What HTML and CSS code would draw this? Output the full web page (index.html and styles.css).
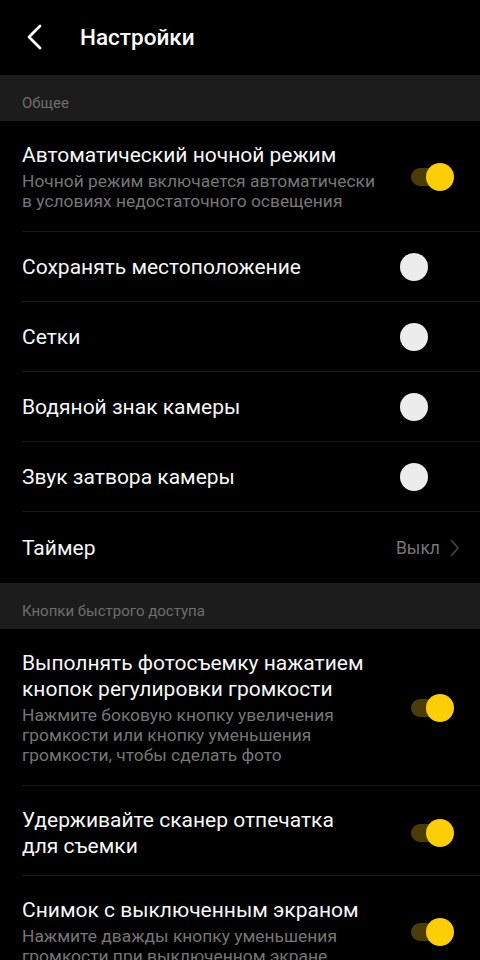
FILE: index.html
```html
<!DOCTYPE html>
<html lang="ru">
<head>
<meta charset="utf-8">
<title>Настройки</title>
<link rel="stylesheet" href="styles.css">
</head>
<body>
<div class="screen">
  <header class="topbar">
    <svg class="back" width="18" height="28" viewBox="0 0 18 28"><path d="M15 3 L4 14 L15 25" fill="none" stroke="#fff" stroke-width="2.8" stroke-linecap="round" stroke-linejoin="round"/></svg>
    <h1 class="title">Настройки</h1>
  </header>

  <div class="section">Общее</div>

  <div class="row row-tall">
    <div class="text">
      <div class="label">Автоматический ночной режим</div>
      <div class="desc">Ночной режим включается автоматически в условиях недостаточного освещения</div>
    </div>
    <div class="switch on"><span class="thumb"></span></div>
  </div>
  <div class="row">
    <div class="text"><div class="label">Сохранять местоположение</div></div>
    <div class="switch"><span class="thumb"></span></div>
  </div>
  <div class="row">
    <div class="text"><div class="label">Сетки</div></div>
    <div class="switch"><span class="thumb"></span></div>
  </div>
  <div class="row">
    <div class="text"><div class="label">Водяной знак камеры</div></div>
    <div class="switch"><span class="thumb"></span></div>
  </div>
  <div class="row">
    <div class="text"><div class="label">Звук затвора камеры</div></div>
    <div class="switch"><span class="thumb"></span></div>
  </div>
  <div class="row row-last">
    <div class="text"><div class="label">Таймер</div></div>
    <div class="value">Выкл
      <svg class="chev" width="9" height="18" viewBox="0 0 9 18"><path d="M1 1 L8 9 L1 17" fill="none" stroke="#4a4a4a" stroke-width="1.4"/></svg>
    </div>
  </div>

  <div class="section">Кнопки быстрого доступа</div>

  <div class="row row-tall">
    <div class="text">
      <div class="label">Выполнять фотосъемку нажатием кнопок регулировки громкости</div>
      <div class="desc">Нажмите боковую кнопку увеличения громкости или кнопку уменьшения громкости, чтобы сделать фото</div>
    </div>
    <div class="switch on"><span class="thumb"></span></div>
  </div>
  <div class="row row-tall row-short">
    <div class="text">
      <div class="label">Удерживайте сканер отпечатка<br>для съемки</div>
    </div>
    <div class="switch on"><span class="thumb"></span></div>
  </div>
  <div class="row row-tall">
    <div class="text">
      <div class="label">Снимок с выключенным экраном</div>
      <div class="desc">Нажмите дважды кнопку уменьшения громкости при выключенном экране</div>
    </div>
    <div class="switch on"><span class="thumb"></span></div>
  </div>
</div>
</body>
</html>
```

FILE: styles.css
```css
* { box-sizing: border-box; margin: 0; padding: 0; }
html, body { background: #000; }
body {
  font-family: Roboto, "Noto Sans", sans-serif;
  color: #fff;
  width: 480px;
  height: 960px;
  overflow: hidden;
}
.screen { display: flex; flex-direction: column; }
.topbar {
  height: 75px;
  display: flex;
  align-items: center;
  padding-left: 25px;
  gap: 37px;
  padding-bottom: 1px;
}
.back { display: block; }
.title {
  font-size: 22.5px;
  font-weight: 500;
}
.section {
  background: #1c1c1c;
  height: 46px;
  display: flex;
  align-items: center;
  padding: 9px 22px 0;
  font-size: 15px;
  color: #6e6e6e;
}
.row {
  display: flex;
  align-items: center;
  justify-content: space-between;
  margin-left: 22px;
  padding-right: 26px;
  min-height: 70px;
  border-bottom: 1px solid #161616;
}
.row-last { border-bottom: none; min-height: 71px; }
.row-tall { padding-top: 21px; padding-bottom: 20px; }
.row-short { padding-bottom: 16px; }
.text { max-width: 358px; }
.label {
  font-size: 21px;
  line-height: 26px;
  color: #f7f7f7;
}
.desc {
  font-size: 17.4px;
  line-height: 20px;
  color: #767676;
  margin-top: 3px;
}
.switch {
  position: relative;
  width: 54px;
  height: 28px;
  flex: none;
}
.switch .thumb {
  position: absolute;
  top: 0;
  left: 0;
  width: 28px;
  height: 28px;
  border-radius: 50%;
  background: #ececec;
}
.switch.on::before {
  content: "";
  position: absolute;
  left: 11px;
  top: 5px;
  width: 34px;
  height: 18px;
  border-radius: 9px;
  background: #4a3d08;
}
.switch.on .thumb {
  left: auto;
  right: 0;
  background: #fcce05;
}
.value {
  display: flex;
  align-items: center;
  gap: 10px;
  font-size: 17.5px;
  color: #767676;
  margin-right: -5px;
}
.chev { display: block; }
```
